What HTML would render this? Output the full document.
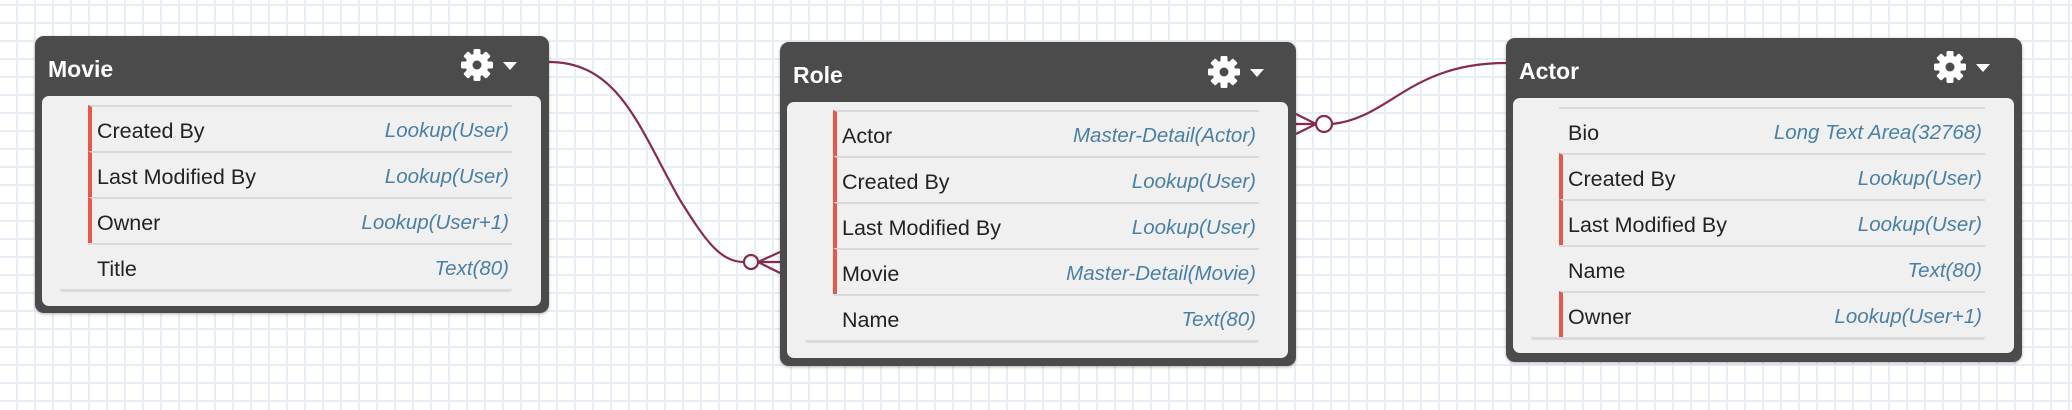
<!DOCTYPE html>
<html><head><meta charset="utf-8">
<style>
*{margin:0;padding:0;box-sizing:border-box}
body{width:2072px;height:410px;overflow:hidden;position:relative;background-color:#fff;
background-image:linear-gradient(to right,#e8eef5 2px,transparent 2px),linear-gradient(to bottom,#e8eef5 2px,transparent 2px);
background-size:18px 18px;background-position:16px 4px;font-family:"Liberation Sans",Arial,sans-serif}
.box{position:absolute;background:#4b4b4b;border-radius:9px;box-shadow:0 1px 3px rgba(0,0,0,.3)}
.title{position:absolute;left:13px;top:20px;color:#fff;font-weight:bold;font-size:23px}
.gear{position:absolute;width:60px;height:36px}
.body{position:absolute;left:7px;right:8px;background:#f0f0f0;border-radius:7px}
.rows{position:absolute;left:46px;right:29px}
.row{position:relative;height:46px;border-top:2px solid #dadada}
.row.r{border-left:4px solid #e8574a}
.row .l{position:absolute;left:9px;top:12px;font-size:21.5px;color:#222}
.row.r .l{left:5px}
.row .t{position:absolute;right:3px;top:12px;font-size:20.5px;color:#4a80a6;font-style:italic}
.end{position:absolute;height:3px;left:-28px;right:0;background:#dadada;border-radius:0 0 6px 6px}
</style></head><body>
<svg width="2072" height="410" style="position:absolute;left:0;top:0">
<g fill="none" stroke="#862c4c" stroke-width="2.2">
<path d="M549 62 C 620 62, 640 130, 680 200 C 705 240, 720 262, 744 262"/>
<circle cx="751" cy="262" r="7"/>
<path d="M758 262 L780 252 M758 262 L780 262 M758 262 L780 273"/>
<path d="M1296 114 L1316 124 M1296 124 L1316 124 M1296 134 L1316 124"/>
<circle cx="1324" cy="124" r="8"/>
<path d="M1332 124 C 1390 118, 1410 63, 1506 63"/>
</g></svg>

<!-- Movie -->
<div class="box" style="left:35px;top:36px;width:514px;height:277px">
<div class="title">Movie</div>
<svg class="gear" style="left:425px;top:12px" viewBox="0 0 60 36">
<g fill="#fff"><g transform="translate(17,17)">
<rect x="-3.5" y="-16" width="7" height="32" rx="1.5"/>
<rect x="-3.5" y="-16" width="7" height="32" rx="1.5" transform="rotate(45)"/>
<rect x="-3.5" y="-16" width="7" height="32" rx="1.5" transform="rotate(90)"/>
<rect x="-3.5" y="-16" width="7" height="32" rx="1.5" transform="rotate(135)"/>
<circle r="11.5"/><circle r="4.5" fill="#4b4b4b"/></g>
<path d="M43 14 L57 14 L50 22Z"/></g></svg>
<div class="body" style="top:60px;bottom:7px">
<div class="rows" style="top:9px">
<div class="row r"><span class="l">Created By</span><span class="t">Lookup(User)</span></div>
<div class="row r"><span class="l">Last Modified By</span><span class="t">Lookup(User)</span></div>
<div class="row r"><span class="l">Owner</span><span class="t">Lookup(User+1)</span></div>
<div class="row"><span class="l">Title</span><span class="t">Text(80)</span></div>
<div class="end"></div>
</div></div></div>

<!-- Role -->
<div class="box" style="left:780px;top:42px;width:516px;height:324px">
<div class="title">Role</div>
<svg class="gear" style="left:427px;top:13px" viewBox="0 0 60 36">
<g fill="#fff"><g transform="translate(17,17)">
<rect x="-3.5" y="-16" width="7" height="32" rx="1.5"/>
<rect x="-3.5" y="-16" width="7" height="32" rx="1.5" transform="rotate(45)"/>
<rect x="-3.5" y="-16" width="7" height="32" rx="1.5" transform="rotate(90)"/>
<rect x="-3.5" y="-16" width="7" height="32" rx="1.5" transform="rotate(135)"/>
<circle r="11.5"/><circle r="4.5" fill="#4b4b4b"/></g>
<path d="M43 14 L57 14 L50 22Z"/></g></svg>
<div class="body" style="top:60px;bottom:8px">
<div class="rows" style="top:8px">
<div class="row r"><span class="l">Actor</span><span class="t">Master-Detail(Actor)</span></div>
<div class="row r"><span class="l">Created By</span><span class="t">Lookup(User)</span></div>
<div class="row r"><span class="l">Last Modified By</span><span class="t">Lookup(User)</span></div>
<div class="row r"><span class="l">Movie</span><span class="t">Master-Detail(Movie)</span></div>
<div class="row"><span class="l">Name</span><span class="t">Text(80)</span></div>
<div class="end"></div>
</div></div></div>

<!-- Actor -->
<div class="box" style="left:1506px;top:38px;width:516px;height:324px">
<div class="title">Actor</div>
<svg class="gear" style="left:427px;top:12px" viewBox="0 0 60 36">
<g fill="#fff"><g transform="translate(17,17)">
<rect x="-3.5" y="-16" width="7" height="32" rx="1.5"/>
<rect x="-3.5" y="-16" width="7" height="32" rx="1.5" transform="rotate(45)"/>
<rect x="-3.5" y="-16" width="7" height="32" rx="1.5" transform="rotate(90)"/>
<rect x="-3.5" y="-16" width="7" height="32" rx="1.5" transform="rotate(135)"/>
<circle r="11.5"/><circle r="4.5" fill="#4b4b4b"/></g>
<path d="M43 14 L57 14 L50 22Z"/></g></svg>
<div class="body" style="top:60px;bottom:9px">
<div class="rows" style="top:9px">
<div class="row"><span class="l">Bio</span><span class="t">Long Text Area(32768)</span></div>
<div class="row r"><span class="l">Created By</span><span class="t">Lookup(User)</span></div>
<div class="row r"><span class="l">Last Modified By</span><span class="t">Lookup(User)</span></div>
<div class="row"><span class="l">Name</span><span class="t">Text(80)</span></div>
<div class="row r"><span class="l">Owner</span><span class="t">Lookup(User+1)</span></div>
<div class="end"></div>
</div></div></div>
</body></html>
